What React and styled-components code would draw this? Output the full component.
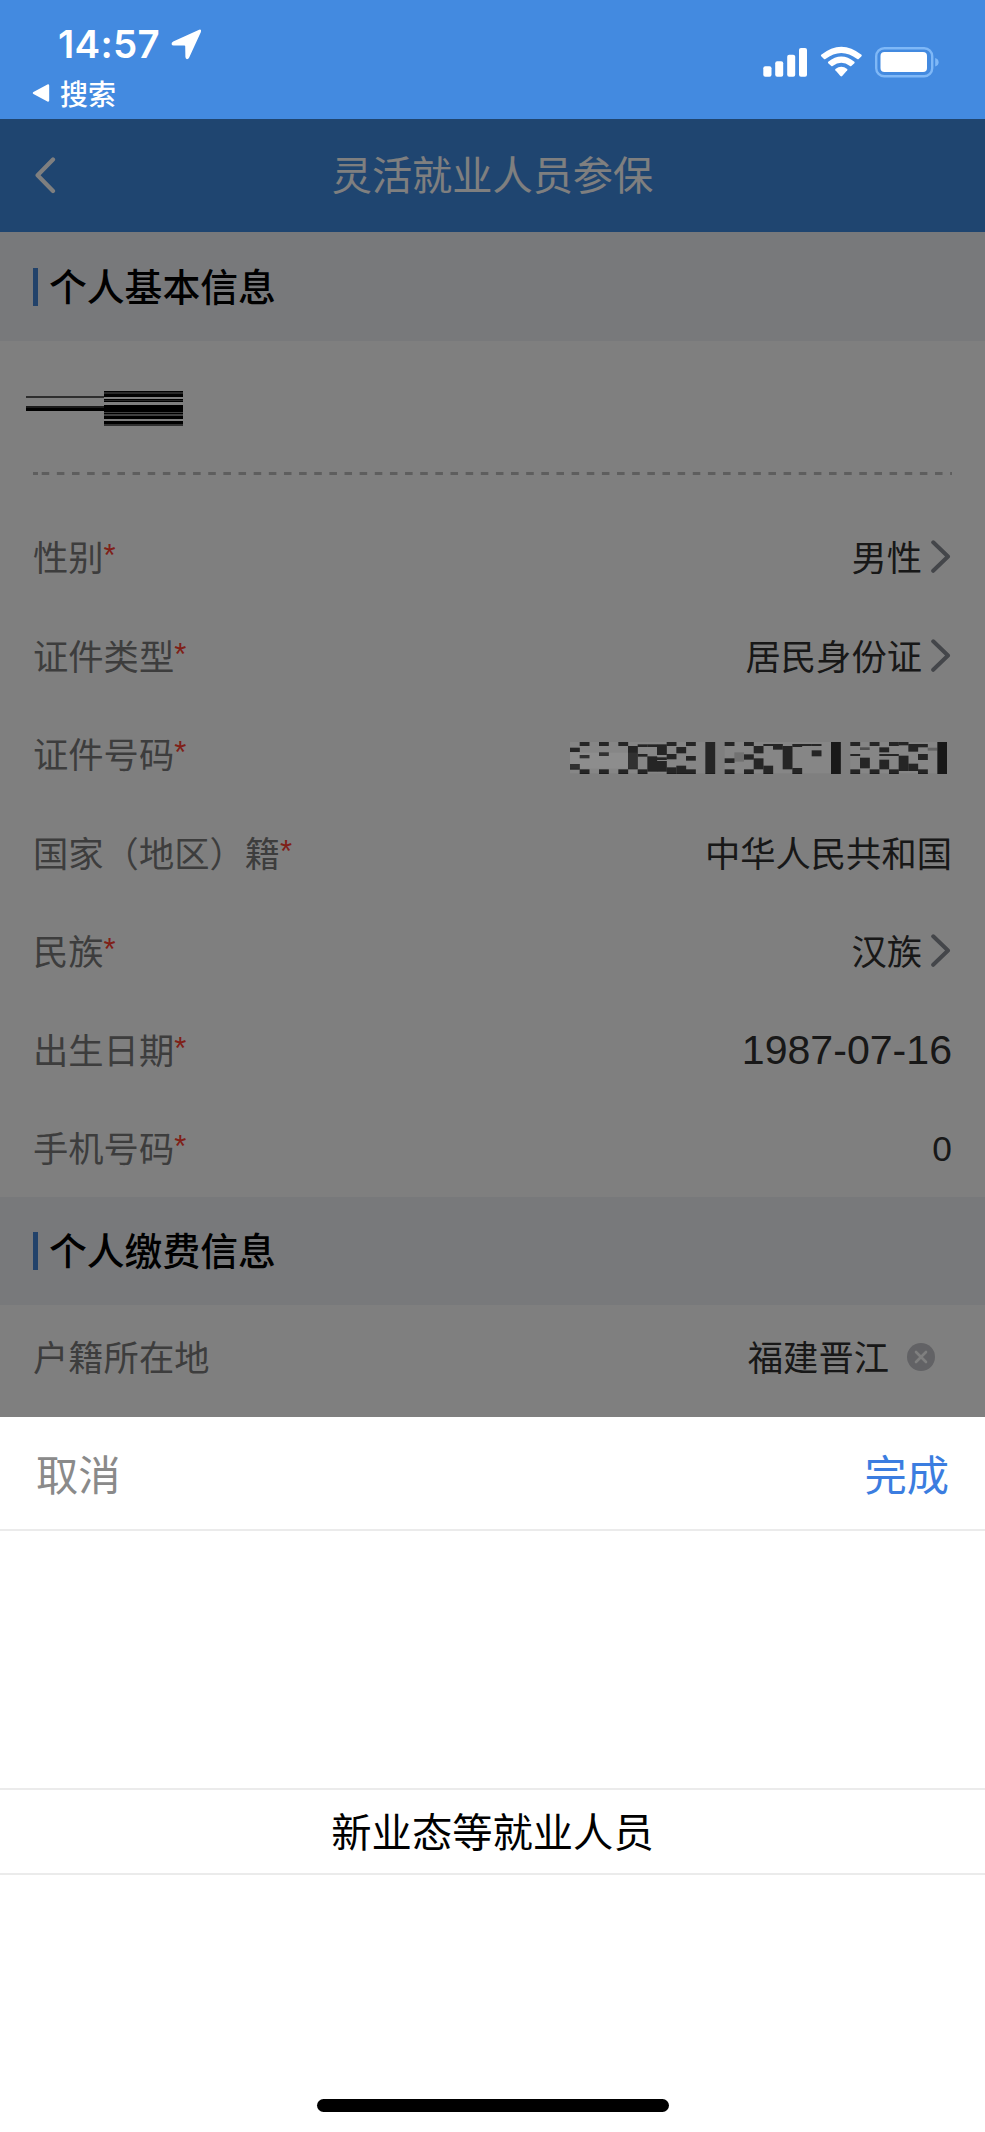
import React from "react";
import styled, { createGlobalStyle } from "styled-components";

const rows = [
    { label: '性别', value: '男性', arrow: true },
    { label: '证件类型', value: '居民身份证', arrow: true },
    { label: '证件号码', masked: true },
    { label: '国家（地区）籍', value: '中华人民共和国' },
    { label: '民族', value: '汉族', arrow: true },
    { label: '出生日期', value: '1987-07-16', size: 41.1, numeric: true },
    { label: '手机号码', value: '0', numeric: true },
];

// dark cells of the masked id number, one list per column: [top, height]
const cells = [
    [[17, 13], [66, 17]],
    [[0, 12], [39, 10], [82, 14]],
    [],
    [[0, 12], [31, 11], [82, 14]],
    [],
    [[0, 12], [82, 14]],
    [[12, 70]],
    [[7, 8], [36, 8], [82, 14]],
    [[7, 8], [43, 46]],
    [[7, 32], [46, 8], [57, 32]],
    [[0, 12], [36, 16], [76, 20]],
    [[15, 19], [71, 25]],
    [[0, 12], [42, 14], [82, 14]],
    [],
    [[0, 96]],
    [],
    [[0, 12], [49, 14], [82, 14]],
    [],
    [[0, 12], [37, 16], [82, 14]],
    [[12, 22], [49, 33]],
    [[6, 6], [71, 25]],
    [[6, 17]],
    [[12, 70]],
    [[6, 9], [78, 18]],
    [[6, 6]],
    [[6, 6], [25, 18]],
    [],
    [[0, 96]],
    [],
    [[0, 12], [36, 6], [82, 14]],
    [[47, 32]],
    [[0, 12], [82, 14]],
    [[16, 15], [36, 6], [53, 29]],
    [[0, 12], [36, 6], [82, 14]],
    [[0, 10], [41, 46]],
    [[6, 23], [65, 22]],
    [[6, 10], [36, 18], [82, 14]],
    [],
    [[0, 96]],
];

// lighter patches between the dark cells: [column, top, columns, height, colour]
const patches = [
    [0, 0, 15, 94, '#ffffff'],
    [0, 32, 7, 48, '#ffffff'],
    [16, 0, 11, 94, '#ffffff'],
    [29, 0, 9, 94, '#ffffff'],
];

const MaskedId = () => (
    <IdMask viewBox="0 0 1131 96" preserveAspectRatio="none">
        <rect x="0" y="0" width="1131" height="96" fill="#fff" />
        <rect x="493" y="31" width="29" height="28" fill="#d2d2d2" />
        <rect x="870" y="16" width="29" height="8" fill="#8c8c8c" />
        <rect x="1073" y="17" width="29" height="9" fill="#b4b4b4" />
        {cells.map((column, i) =>
            column.map(([top, height]) => (
                <rect key={`${i}-${top}`} x={i * 29} y={top} width="29.5" height={height} fill="#303030" />
            ))
        )}
    </IdMask>
);

// soft grey glow left by the mosaic, drawn above the dimmed page
const MaskedIdGlow = () => (
    <Glow viewBox="0 0 1131 96" preserveAspectRatio="none">
        {patches.map(([column, top, count, height, colour]) => (
            <rect key={`${column}-${top}`} x={column * 29} y={top} width={count * 29} height={height} fill={colour} opacity="0.06" />
        ))}
    </Glow>
);

const MaskedName = () => (
    <NameMask viewBox="0 0 157 35" shapeRendering="crispEdges">
        <rect x="0" y="5" width="78" height="2" fill="#5c5c5c" />
        <rect x="0" y="15" width="78" height="2" fill="#363636" />
        <rect x="0" y="17" width="78" height="3" fill="#000" />
        <rect x="78" y="0" width="79" height="35" fill="#000" />
        <rect x="78" y="1" width="79" height="2" fill="#505050" />
        <rect x="78" y="6" width="79" height="2" fill="#fff" />
        <rect x="78" y="9" width="79" height="1" fill="#505050" />
        <rect x="78" y="11" width="79" height="3" fill="#fff" />
        <rect x="78" y="21" width="79" height="1" fill="#808080" />
        <rect x="78" y="23" width="79" height="2" fill="#808080" />
        <rect x="78" y="28" width="79" height="2" fill="#fff" />
        <rect x="78" y="33" width="79" height="2" fill="#606060" />
    </NameMask>
);

const Arrow = () => (
    <svg width="21" height="34" viewBox="0 0 21 34" fill="none">
        <path d="M2.2 2.3 L17 16.5 L2.2 30.8" stroke="#888c94" strokeWidth="4" strokeLinecap="round" strokeLinejoin="round" />
    </svg>
);

const StatusBar = () => (
    <Status>
        <StatusLeft>
            <Time>
                14:57
                <svg width="31" height="31" viewBox="0 0 31 31">
                    <path d="M27.6 1 L2.2 12.4 Q0.2 13.6 0.6 15.2 Q1 16.4 2.6 16.4 L13.4 16.5 Q14.2 16.6 14.2 17.2 L14.4 28 Q14.6 29.8 16 30.2 Q17.4 30.2 18.2 28.6 L29.9 3 Q30.3 1.4 29.7 0.8 Q28.9 0.3 27.6 1 Z" fill="#fff" />
                </svg>
            </Time>
            <BackApp>
                <svg width="18" height="18" viewBox="0 0 18 18">
                    <path d="M16 1.5 L2 9 L16 16.5 Z" fill="#fff" stroke="#fff" strokeWidth="2.4" strokeLinejoin="round" />
                </svg>
                <span>搜索</span>
            </BackApp>
        </StatusLeft>
        <StatusIcons width="178" height="34" viewBox="0 0 178 34">
            <g fill="#fff">
                <rect x="1.3" y="20.3" width="8.2" height="10.5" rx="2" />
                <rect x="13.2" y="15.2" width="8" height="15.6" rx="2" />
                <rect x="25.2" y="8.8" width="8" height="22" rx="2" />
                <rect x="37" y="2" width="8" height="28.8" rx="2" />
                <path d="M59.2 8.8 Q79.3 -7.4 99.5 8.8 Q100 9.5 99.5 10.2 L96.7 13 Q96 13.5 95.2 13 Q79.3 0.8 63.4 13 Q62.7 13.5 62 13 L59.2 10.2 Q58.6 9.5 59.2 8.8 Z" />
                <path d="M66.2 15.8 Q79.3 5.4 92.4 15.8 Q93 16.5 92.4 17.2 L89.3 20.1 Q88.6 20.6 88 20.1 Q79.3 13.5 70.6 20.1 Q70 20.6 69.3 20.1 L66.2 17.2 Q65.6 16.5 66.2 15.8 Z" />
                <path d="M73.4 23 Q79.3 18.6 85.2 23 Q85.7 23.6 85.2 24.3 L80.2 30 Q79.3 30.9 78.4 30 L73.4 24.3 Q72.9 23.6 73.4 23 Z" />
                <rect x="118.5" y="6" width="46.5" height="20" rx="4" />
            </g>
            <rect x="114.2" y="2.2" width="56" height="28" rx="8" fill="none" stroke="#7fb8f7" strokeWidth="2.4" />
            <path d="M173.2 12 Q176.6 13 176.6 16.2 Q176.6 19.4 173.2 20.5 Z" fill="#7fb8f7" />
        </StatusIcons>
    </Status>
);

const App = () => {
    return (
        <Screen>
            <GlobalStyle />
            <StatusBar />
            <Page>
                <NavBar>
                    <svg width="22" height="38" viewBox="0 0 22 38" fill="none">
                        <path d="M18 2.6 L2.6 18.2 L18 34" stroke="#fff" strokeWidth="4.2" strokeLinecap="round" strokeLinejoin="round" />
                    </svg>
                    <h1>灵活就业人员参保</h1>
                </NavBar>
                <SectionTitle><span>个人基本信息</span></SectionTitle>
                <NameRow>
                    <MaskedName />
                </NameRow>
                <Divider />
                <Rows>
                    {rows.map((row) => (
                        <Row key={row.label}>
                            <Label>{row.label}<sup>*</sup></Label>
                            {row.masked ? (
                                <IdBox>
                                    <MaskedId />
                                    <MaskedIdGlow />
                                </IdBox>
                            ) : (
                                <Value $size={row.size} $numeric={row.numeric}>
                                    <span>{row.value}</span>
                                    {row.arrow && <Arrow />}
                                </Value>
                            )}
                        </Row>
                    ))}
                </Rows>
                <SectionTitle $short><span>个人缴费信息</span></SectionTitle>
                <LastRow>
                    <Label>户籍所在地</Label>
                    <ClearableValue>
                        <span>福建晋江</span>
                        <svg width="28" height="28" viewBox="0 0 28 28">
                            <circle cx="14" cy="14" r="14" fill="#c4c5ca" />
                            <path d="M9 9 L19 19 M19 9 L9 19" stroke="#fff" strokeWidth="2.6" strokeLinecap="round" />
                        </svg>
                    </ClearableValue>
                </LastRow>
                <Overlay />
            </Page>
            <Sheet>
                <SheetHeader>
                    <SheetButton $color="#8a8a8a">取消</SheetButton>
                    <SheetButton $color="#3b7de0">完成</SheetButton>
                </SheetHeader>
                <Picker>
                    <PickerItem>新业态等就业人员</PickerItem>
                </Picker>
                <HomeIndicator />
            </Sheet>
        </Screen>
    )
}

const GlobalStyle = createGlobalStyle`
    * {
        box-sizing: border-box;
    }
    body {
        margin: 0;
        background: #fff;
        font-family: "Liberation Sans", "Noto Sans CJK SC", sans-serif;
    }
    svg {
        display: block;
        flex-shrink: 0;
    }
`;

const Screen = styled.div`
    width: 985px;
    height: 2132px;
    display: flex;
    flex-direction: column;
    overflow: hidden;
`;

const Status = styled.header`
    height: 119px;
    flex-shrink: 0;
    display: flex;
    justify-content: space-between;
    background: #438ae0;
    color: #fff;
`;

const StatusLeft = styled.div`
    padding: 20px 0 0 32px;
`;

const Time = styled.div`
    display: flex;
    align-items: center;
    gap: 11px;
    height: 48px;
    padding-left: 26px;
    font-family: Inter, sans-serif;
    font-size: 38.5px;
    font-weight: 600;
    letter-spacing: 0.3px;
`;

const BackApp = styled.div`
    display: flex;
    align-items: center;
    gap: 10px;
    height: 50px;
    font-size: 28px;
    font-weight: 500;
    span {
        padding-bottom: 1px;
    }
`;

const StatusIcons = styled.svg`
    margin: 46px 45px 0 0;
`;

const Page = styled.main`
    position: relative;
    height: 1298px;
    flex-shrink: 0;
    background: #fff;
`;

const NavBar = styled.nav`
    height: 113px;
    display: flex;
    align-items: center;
    padding: 0 35px;
    background: #3e8ae0;
    color: #fff;
    h1 {
        flex: 1;
        margin: 0 22px 0 0;
        padding-bottom: 6px;
        font-size: 40.2px;
        font-weight: 400;
        text-align: center;
    }
`;

const SectionTitle = styled.h2`
    height: ${(props) => (props.$short ? 108 : 109)}px;
    margin: 0;
    padding-left: 33px;
    display: flex;
    align-items: center;
    gap: 11px;
    background: #f0f3f7;
    color: #000;
    font-size: 37.8px;
    font-weight: 500;
    &::before {
        content: "";
        width: 5px;
        height: 38px;
        background: #4484d4;
    }
    span {
        padding-bottom: 5px;
    }
`;

const NameRow = styled.div`
    height: 131px;
    padding: 50px 26px 0;
`;

const NameMask = styled.svg`
    width: 157px;
    height: 35px;
`;

const Divider = styled.div`
    height: 3px;
    margin: 0 33px;
    background:
        linear-gradient(#bcbcbc, #bcbcbc) 0 0 / 5px 3px no-repeat,
        linear-gradient(90deg, #bcbcbc 8px, transparent 8px) 8.7px 0 / 15.15px 3px repeat-x;
`;

const Rows = styled.div`
    padding-top: 33px;
    height: 722px;
`;

const Row = styled.div`
    height: 98.5px;
    padding: 0 33px;
    display: flex;
    align-items: center;
    justify-content: space-between;
`;

const LastRow = styled(Row)`
    height: 103px;
`;

const Label = styled.div`
    padding-bottom: 3px;
    color: #7a7a7a;
    font-size: 35.3px;
    white-space: nowrap;
    sup {
        font-size: 31px;
        line-height: 0;
        vertical-align: 5px;
        color: #ff4030;
    }
`;

const Value = styled.div`
    display: flex;
    align-items: center;
    gap: 9px;
    color: #303030;
    font-size: ${(props) => props.$size || 35.3}px;
    span {
        padding: ${(props) => (props.$numeric ? '2px 0 0' : '0 0 3px')};
    }
`;

const ClearableValue = styled(Value)`
    gap: 18px;
    padding-right: 17px;
`;

const IdBox = styled.div`
    position: relative;
    margin: 7px 5px 0 0;
`;

const IdMask = styled.svg`
    width: 377px;
    height: 32px;
`;

const Glow = styled.svg`
    position: absolute;
    inset: 0;
    z-index: 2;
    width: 377px;
    height: 32px;
`;

const Overlay = styled.div`
    position: absolute;
    inset: 0;
    z-index: 1;
    background: rgba(0, 0, 0, 0.5);
`;

const Sheet = styled.section`
    flex: 1;
    display: flex;
    flex-direction: column;
    align-items: center;
    background: #fff;
`;

const SheetHeader = styled.div`
    width: 100%;
    height: 114px;
    padding: 0 36px;
    display: flex;
    align-items: center;
    justify-content: space-between;
    border-bottom: 2px solid #ebebeb;
`;

const SheetButton = styled.button`
    padding: 0 0 1px;
    border: 0;
    background: none;
    font-family: inherit;
    font-size: 42.3px;
    color: ${(props) => props.$color};
`;

const Picker = styled.div`
    width: 100%;
    padding-top: 257px;
    height: 568px;
`;

const PickerItem = styled.div`
    height: 87px;
    padding-bottom: 4px;
    display: flex;
    align-items: center;
    justify-content: center;
    border-top: 2px solid #ebebeb;
    border-bottom: 2px solid #ebebeb;
    color: #000;
    font-size: 40.3px;
`;

const HomeIndicator = styled.div`
    width: 352px;
    height: 13px;
    border-radius: 7px;
    background: #000;
`;

export default App
